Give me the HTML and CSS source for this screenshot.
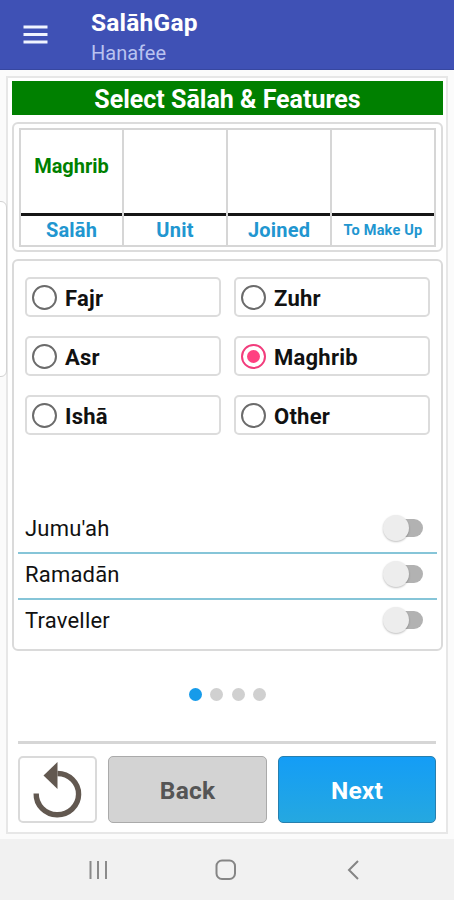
FILE: index.html
```html
<!DOCTYPE html>
<html lang="en">
<head>
<meta charset="utf-8">
<title>SalāhGap</title>
<link rel="stylesheet" href="styles.css">
</head>
<body>
<header class="appbar">
  <svg class="menu" width="25" height="19" viewBox="0 0 25 19"><path d="M0.500 2h24M0.500 9.500h24M0.500 17h24" stroke="#f0f4ff" stroke-width="3"/></svg>
  <div class="titles">
    <h1>SalāhGap</h1>
    <p>Hanafee</p>
  </div>
</header>
<div class="edge"></div>
<main class="frame">
  <h2 class="banner"><span>Select Sālah &amp; Features</span></h2>
  <section class="summary">
    <div class="cell"><div class="value">Maghrib</div><div class="label">Salāh</div></div>
    <div class="cell"><div class="value"></div><div class="label">Unit</div></div>
    <div class="cell"><div class="value"></div><div class="label">Joined</div></div>
    <div class="cell"><div class="value"></div><div class="label small">To Make Up</div></div>
  </section>
  <section class="panel">
    <div class="options">
      <div class="option"><i class="radio"></i><span>Fajr</span></div>
      <div class="option"><i class="radio"></i><span>Zuhr</span></div>
      <div class="option"><i class="radio"></i><span>Asr</span></div>
      <div class="option"><i class="radio on"></i><span>Maghrib</span></div>
      <div class="option"><i class="radio"></i><span>Ishā</span></div>
      <div class="option"><i class="radio"></i><span>Other</span></div>
    </div>
    <div class="switches">
      <div class="row"><span>Jumu'ah</span><i class="switch"></i></div>
      <div class="row"><span>Ramadān</span><i class="switch"></i></div>
      <div class="row"><span>Traveller</span><i class="switch"></i></div>
    </div>
  </section>
  <div class="dots"><i class="active"></i><i></i><i></i><i></i></div>
  <div class="actions">
    <button class="reset" aria-label="Reset"><svg width="50" height="56" viewBox="0 0 50 56"><path d="M3.200 31.500A21.200 20.600 0 1 0 24.500 11.500" fill="none" stroke="#625850" stroke-width="5.400"/><path d="M24.500 0V27L10.500 13.500Z" fill="#625850"/></svg></button>
    <button class="back">Back</button>
    <button class="next">Next</button>
  </div>
</main>
<nav class="navbar">
  <svg width="20" height="20" viewBox="0 0 20 20"><path d="M2.500 1v18M10 1v18M18 1v18" stroke="#8b8b8b" stroke-width="2"/></svg>
  <svg width="22" height="22" viewBox="0 0 22 22"><rect x="1.500" y="1.500" width="18.500" height="18.500" rx="5.500" fill="none" stroke="#858585" stroke-width="2"/></svg>
  <svg width="12" height="20" viewBox="0 0 12 20"><path d="M11 1L2 10L11 19" fill="none" stroke="#858585" stroke-width="2"/></svg>
</nav>
</body>
</html>
```
FILE: styles.css
```css
* { box-sizing: border-box; margin: 0; padding: 0; }
body {
  width: 454px;
  height: 900px;
  display: flex;
  flex-direction: column;
  background: #fbfbfb;
  font-family: Roboto, sans-serif;
  color: #111;
  position: relative;
  overflow: hidden;
}
.appbar {
  height: 70px;
  flex: none;
  display: flex;
  align-items: flex-start;
  background: #3f51b5;
  border-bottom: 1px solid #3747a0;
  padding-left: 23px;
}
.menu { margin-top: 25px; }
.titles { margin-left: 43px; padding-top: 9px; }
.appbar h1 { font-size: 24.500px; line-height: 28px; font-weight: 700; letter-spacing: .2px; color: #fff; }
.appbar p { font-size: 20px; line-height: 24px; margin-top: 4px; color: #b9c3f0; }
.edge {
  position: absolute;
  left: -8px;
  top: 201px;
  width: 15px;
  height: 176px;
  border: 1px solid #d2d2d2;
  border-radius: 6px;
  background: #fff;
}
.frame {
  width: 442px;
  height: 758px;
  margin: 6px 0 0 6px;
  flex: none;
  border: 2px solid #e7e7e7;
  background: #fff;
  padding: 3px 3px 0 4px;
  display: flex;
  flex-direction: column;
}
.banner {
  height: 34px;
  flex: none;
  background: #008000;
  color: #fff;
  font-size: 25px;
  line-height: 38px;
  font-weight: 700;
  text-align: center;
}
.summary {
  height: 130px;
  flex: none;
  margin-top: 7px;
  border: 2px solid #dcdcdc;
  border-radius: 6px;
  padding: 4px 5px 4px 5px;
  display: grid;
  grid-template-columns: 105px 104px 104px 1fr;
}
.cell { border: 2px solid #d6d6d6; border-left-width: 0; display: flex; flex-direction: column; text-align: center; font-weight: 700; }
.cell:first-child { border-left-width: 2px; }
.value { height: 86px; border-bottom: 3px solid #161616; color: #008000; font-size: 20px; line-height: 73px; }
.label { color: #2196d0; font-size: 20px; line-height: 29px; letter-spacing: .2px; }
.small { font-size: 14.500px; }
.panel {
  height: 392px;
  flex: none;
  margin-top: 7px;
  border: 2px solid #dadada;
  border-radius: 6px;
  padding: 16px 4px 0;
}
.options {
  display: grid;
  grid-template-columns: 196px 196px;
  gap: 19px 13px;
  padding-left: 7px;
}
.option {
  height: 40px;
  border: 2px solid #dcdcdc;
  border-radius: 5px;
  display: flex;
  align-items: center;
  gap: 8px;
  padding-left: 5px;
  font-size: 22px;
  font-weight: 700;
  letter-spacing: .25px;
}
.option span { padding-top: 2px; }
.radio {
  width: 25px;
  height: 25px;
  flex: none;
  border: 2px solid #6b6b6b;
  border-radius: 50%;
  display: grid;
  place-items: center;
}
.radio.on { border-color: #f23c7c; }
.radio.on::after { content: ""; width: 13px; height: 13px; border-radius: 50%; background: #ff4081; }
.switches { margin-top: 73px; }
.row {
  height: 46px;
  display: flex;
  align-items: center;
  justify-content: space-between;
  padding: 0 13px 4px 7px;
  font-size: 22px;
  letter-spacing: .2px;
  border-bottom: 2px solid #86c5d8;
}
.row span { padding-top: 1px; }
.row:last-child { border-bottom-color: transparent; }
.switch {
  width: 37px;
  height: 18px;
  margin-right: 1px;
  border-radius: 9px;
  background: #b2b2b2;
  display: flex;
  align-items: center;
}
.switch::before {
  content: "";
  width: 26px;
  height: 26px;
  flex: none;
  margin-left: -3px;
  border-radius: 50%;
  background: #ededed;
  box-shadow: 0 1px 2px rgba(0, 0, 0, .25);
}
.dots { display: flex; justify-content: center; gap: 8.500px; margin-top: 37px; height: 13px; }
.dots i { width: 13px; height: 13px; border-radius: 50%; background: #d0d0d0; }
.dots .active { background: #169bea; }
.actions {
  margin: 40px 7px 0 6px;
  border-top: 3px solid #d6d6d6;
  padding-top: 12px;
  display: grid;
  grid-template-columns: 79px 159px 158px;
  column-gap: 11px;
}
.actions button {
  height: 67px;
  border-radius: 5px;
  padding-top: 2px;
  font: 700 24.500px Roboto, sans-serif;
  letter-spacing: .2px;
}
.actions .reset { background: #fff; border: 2px solid #dadada; display: grid; place-items: center; padding: 0; }
.reset svg { overflow: visible; }
.back { background: #d3d3d3; border: 1px solid #aaa; color: #555; }
.next { background: linear-gradient(#149df6, #25a8e0); border: 1px solid #277fae; color: #fff; }
.navbar {
  height: 61px;
  margin-top: auto;
  background: #f1f1f1;
  display: flex;
  align-items: center;
  justify-content: space-between;
  padding: 0 95px 0 88px;
}
.navbar svg:nth-child(2) { margin-right: 3px; }
```
